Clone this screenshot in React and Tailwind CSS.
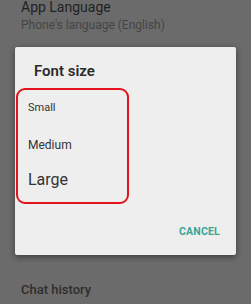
import React from 'react';

const App = () => {
  return (
    <div className="w-[251px] h-[304px] bg-[#6b6b6b] overflow-hidden font-['Roboto',sans-serif]">
      <div className="pl-[21px] pt-[0px] h-[47px]">
        <div className="text-[14px] leading-[14px] text-[#222]">App Language</div>
        <div className="text-[12px] leading-[14px] mt-[4px] text-[#454545]">Phone's language (English)</div>
      </div>
      <div className="ml-[15px] w-[221px] h-[208px] bg-[#eeeeee] rounded-[2px] shadow-[0_2px_6px_rgba(0,0,0,0.45)] flex flex-col">
        <div className="pl-[19px] pt-[15px] text-[15px] leading-[18px] font-semibold text-[#2b2b2b]">Font size</div>
        <div className="ml-[1px] mt-[8px] w-[113px] h-[116px] border-[2.5px] border-[#e3121b] rounded-[9px] flex flex-col pl-[10px] pt-[11px]">
          <div className="text-[11px] leading-[14px] text-[#333]">Small</div>
          <div className="text-[12px] leading-[14px] mt-[23px] text-[#333]">Medium</div>
          <div className="text-[16px] leading-[18px] mt-[19px] text-[#333]">Large</div>
        </div>
        <div className="flex justify-end pr-[16px] mt-[22px]">
          <span className="text-[10.5px] leading-[12px] font-bold tracking-[0.2px] text-[#3aa596]">CANCEL</span>
        </div>
      </div>
      <div className="pl-[21px] mt-[27px] text-[13px] leading-[16px] font-medium text-[#2e2e2e]">Chat history</div>
    </div>
  );
};

export default App;
